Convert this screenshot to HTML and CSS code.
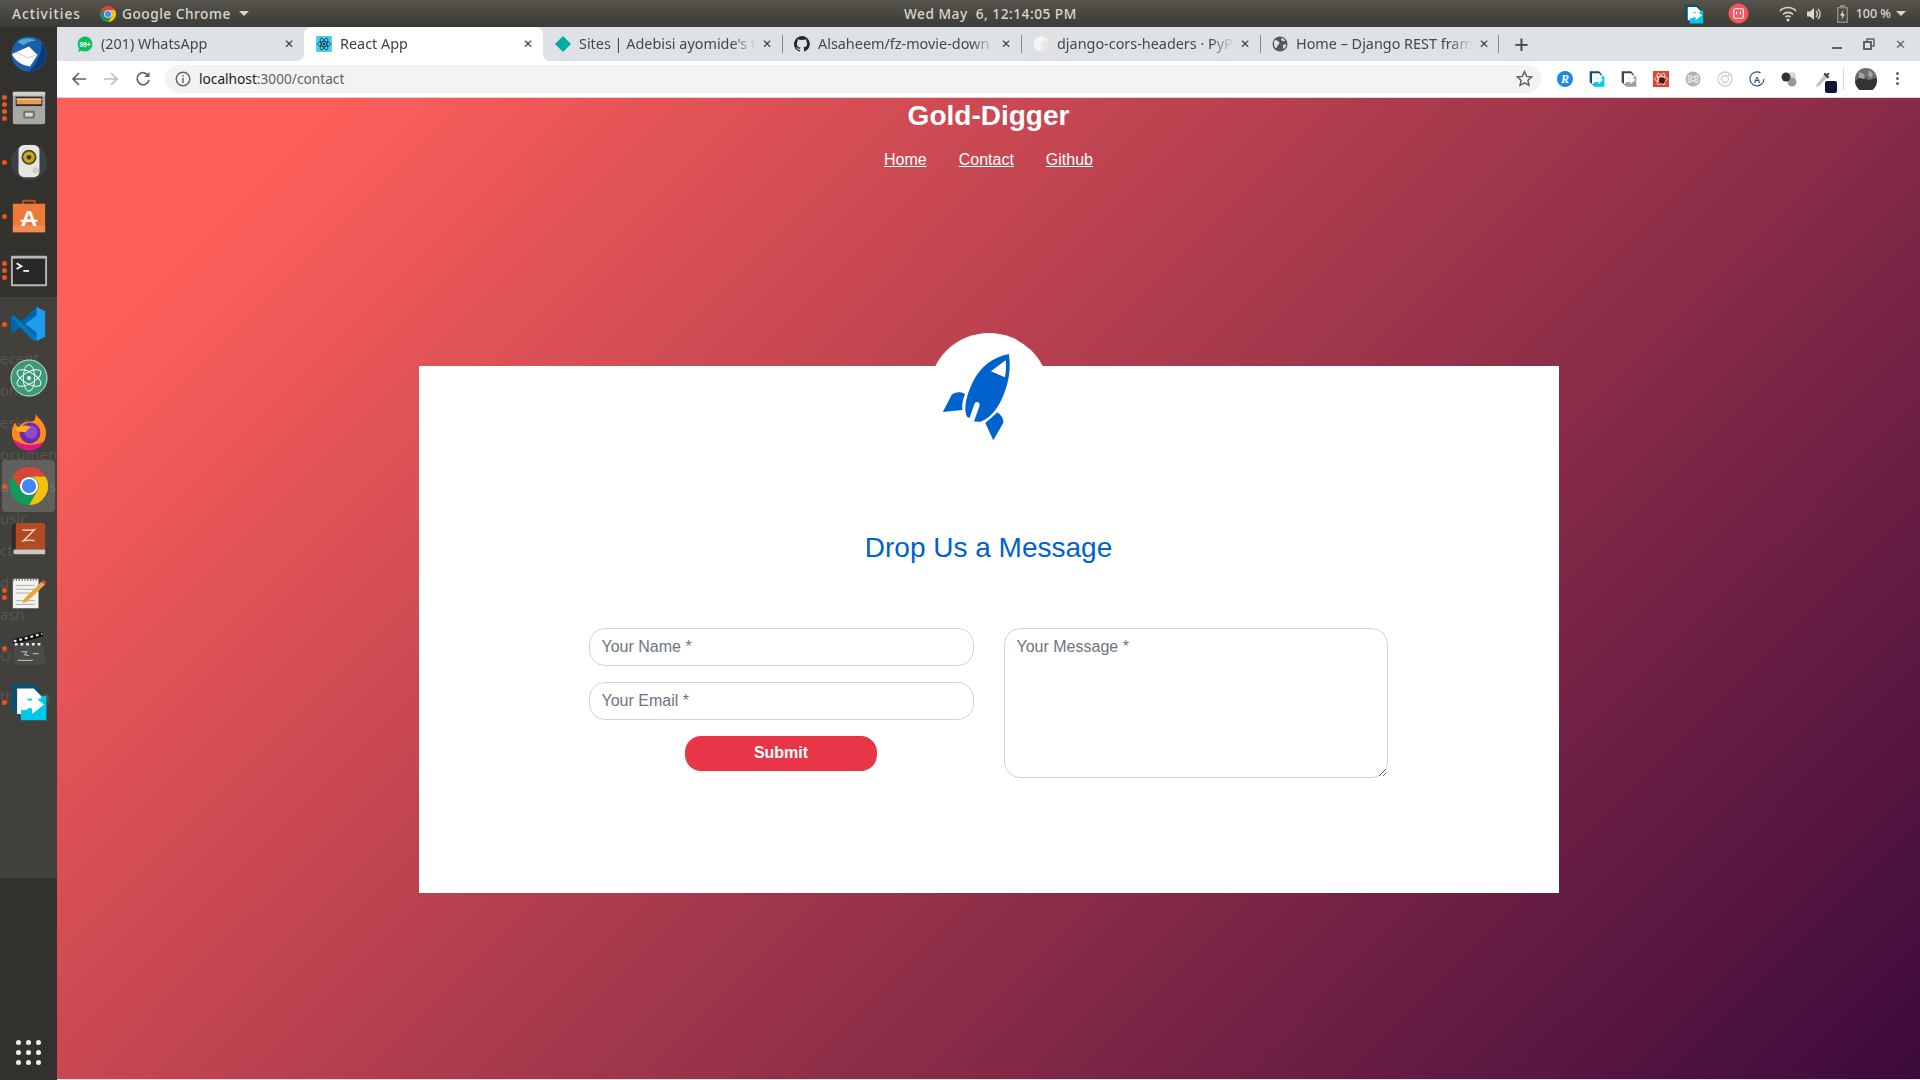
FILE: index.html
```html
<!DOCTYPE html>
<html lang="en">
<head>
  <meta charset="UTF-8">
  <title>React App</title>
  <link rel="stylesheet" href="styles.css">
</head>
<body>
  <svg class="defs" width="0" height="0">
    <symbol id="chrome" viewBox="0 0 48 48">
      <path fill="#db4437" d="M3.2 12A24 24 0 0 1 44.8 12H24a12 12 0 0 0-10.4 18z"/>
      <path fill="#f4c20d" d="M44.8 12A24 24 0 0 1 24 48L34.4 30A12 12 0 0 0 24 12z"/>
      <path fill="#0f9d58" d="M3.2 12L13.6 30A12 12 0 0 0 34.4 30L24 48A24 24 0 0 1 3.2 12z"/>
      <circle cx="24" cy="24" r="11.5" fill="#fff"/>
      <circle cx="24" cy="24" r="9" fill="#4285f4"/>
    </symbol>
    <symbol id="xdm" viewBox="0 0 48 48">
      <path fill="#0b4f71" d="M2 1h28l8 8v33H12L2 34z"/>
      <path fill="#00c8e8" d="M12 16h26l8 0v31H14z"/>
      <path fill="#fff" d="M9 7h21l9 9v4H22v7H9zM9 27h13v7H9zM9 34h5v5H9z"/>
      <path fill="#fff" d="M18 22h10v-7l15 12-15 12v-7H18z"/>
    </symbol>
  </svg>

  <header class="topbar">
    <span class="top-item activities">Activities</span>
    <span class="top-item app-menu">
      <svg class="app-logo"><use href="#chrome"/></svg>
      Google Chrome
      <i class="caret"></i>
    </span>
    <span class="clock">Wed May&nbsp; 6, 12:14:05 PM</span>
    <div class="tray">
      <svg class="tray-xdm"><use href="#xdm"/></svg>
      <svg class="tray-rec" viewBox="0 0 22 22">
        <circle cx="11" cy="11" r="10.5" fill="#f2555d"/>
        <rect x="6" y="6" width="10" height="10" rx="1.5" fill="none" stroke="#fff" stroke-width="1.2"/>
        <path d="M9 9v3M13 9v3" stroke="#fff" stroke-width="1.2"/>
      </svg>
      <svg class="tray-wifi" viewBox="0 0 18 16" fill="none" stroke="#d8d7d1" stroke-width="1.6">
        <path d="M1 5a11 11 0 0 1 16 0M4 8.5a7 7 0 0 1 10 0M6.5 11a3.5 3.5 0 0 1 5 0"/>
        <circle cx="9" cy="14" r="1.5" fill="#d8d7d1" stroke="none"/>
      </svg>
      <svg class="tray-vol" viewBox="0 0 16 16" fill="none" stroke="#d8d7d1" stroke-width="1.3">
        <path d="M1 5.5h3L8 2v12l-4-3.5H1z" fill="#d8d7d1" stroke="none"/>
        <path d="M10 5a4 4 0 0 1 0 6M12 3a7 7 0 0 1 0 10"/>
      </svg>
      <svg class="tray-bat" viewBox="0 0 13 18">
        <path d="M4 0h5v2h3v16H1V2h3z" fill="#8a8984"/>
        <path d="M2.5 3.5h8v13h-8z" fill="#4a4843"/>
        <path d="M7.5 4.5L4 10.5h2.3L5.5 15 9 9H6.700z" fill="#d8d7d1"/>
      </svg>
      <span class="battery-text">100 %</span>
      <i class="caret"></i>
    </div>
  </header>

  <div class="desktop">
    <aside class="dock">
      <div class="dock-ghost">
        <span>ecent</span>
        <span>om</span>
        <span>eskt</span>
        <span>ocumen</span>
        <span>ow &nbsp; &nbsp; ds</span>
        <span>usic</span>
        <span>ct</span>
        <span>d</span>
        <span>ash</span>
        <span class="ghost-gap">O + PA</span>
        <span class="ghost-gap">th &nbsp; &nbsp; ca</span>
      </div>

      <div class="dock-item">
        <svg class="icon-mail" viewBox="0 0 40 40">
          <circle cx="20" cy="19" r="18.5" fill="#1c5fa8"/>
          <path fill="#0a3a78" d="M20 37a18 18 0 0 0 18-18c0-5-2-9-5-12 1 10-4 22-13 30z"/>
          <path fill="#4fa3df" d="M8 6c5-4 14-5 19-1-5 0-10 2-13 5z"/>
          <path fill="#fff" d="M2 19l18-8 9 9-8 12C12 31 5 26 2 19z"/>
          <path fill="none" stroke="#b9c6d6" stroke-width="1" d="M6 17l13 6 9-3"/>
        </svg>
      </div>
      <div class="dock-item">
        <span class="pips"><b></b><b></b><b></b><b></b></span>
        <svg viewBox="0 0 40 40">
          <rect x="3" y="3" width="34" height="34" rx="2" fill="#a8a8a4"/>
          <rect x="3" y="3" width="34" height="4" fill="#cfcfcb"/>
          <rect x="6" y="8" width="28" height="10" fill="#2f2f2c"/>
          <rect x="7" y="10" width="26" height="6" fill="#e89a55"/>
          <rect x="7" y="10" width="26" height="1.5" fill="#f4c898"/>
          <rect x="14" y="23" width="12" height="8" rx="1" fill="#6e6e6a"/>
          <rect x="16" y="25" width="8" height="4" fill="#d6d6d2"/>
        </svg>
      </div>
      <div class="dock-item">
        <span class="pips"><b></b></span>
        <svg viewBox="0 0 40 40">
          <circle cx="20" cy="20" r="19" fill="#3c4146"/>
          <rect x="9" y="2" width="22" height="34" rx="6" fill="#e8e6e0"/>
          <circle cx="20" cy="15" r="8" fill="#4d4a2e"/>
          <circle cx="20" cy="15" r="6" fill="#c8a820"/>
          <circle cx="20" cy="15" r="2.5" fill="#3f3c20"/>
          <circle cx="27" cy="29" r="3.5" fill="#cfcdc6"/>
        </svg>
      </div>
      <div class="dock-item">
        <span class="pips"><b></b></span>
        <svg viewBox="0 0 40 40">
          <path fill="none" stroke="#b84f22" stroke-width="2" d="M14 9V4h12v5"/>
          <path fill="#ee7a3a" d="M3 7h34v30H3z"/>
          <path fill="#f49a66" d="M3 30h34v7H3z" opacity=".6"/>
          <text x="20" y="31" class="soft-a">A</text>
          <path fill="#fff" d="M11 24h18v2H11z"/>
        </svg>
      </div>
      <div class="dock-item">
        <span class="pips"><b></b><b></b><b></b></span>
        <svg viewBox="0 0 40 40">
          <rect x="1" y="5" width="38" height="32" rx="1" fill="#b6b6b2"/>
          <rect x="3" y="8" width="34" height="27" fill="#26282a"/>
          <path fill="none" stroke="#fff" stroke-width="1.8" d="M7 13l5 3-5 3"/>
          <path stroke="#fff" stroke-width="1.8" d="M14 21h6"/>
        </svg>
      </div>
      <div class="dock-item">
        <span class="pips"><b></b></span>
        <svg viewBox="0 0 40 40">
          <path fill="#0065a9" d="M28 2l9 4.5v27L28 38 12 23 4 29 1 27v-14l3-2 8 6z"/>
          <path fill="#007acc" d="M1 13l3-2 24 23v4l-4-1z" opacity=".9"/>
          <path fill="#1f9cf0" d="M28 2l9 4.5v27L28 38zM28 11L16 20l12 9z" fill-rule="evenodd"/>
        </svg>
      </div>
      <div class="dock-item">
        <svg viewBox="0 0 40 40" fill="none" stroke="#fff" stroke-width="1">
          <circle cx="20" cy="20" r="19" fill="#3c9a78" stroke="#d6e6dc"/>
          <ellipse cx="20" cy="20" rx="14" ry="6" transform="rotate(30 20 20)"/>
          <ellipse cx="20" cy="20" rx="14" ry="6" transform="rotate(-30 20 20)"/>
          <ellipse cx="20" cy="20" rx="14" ry="6" transform="rotate(90 20 20)"/>
          <circle cx="20" cy="20" r="2" fill="#fff" stroke="none"/>
        </svg>
      </div>
      <div class="dock-item">
        <svg viewBox="0 0 40 40">
          <path fill="#ff8a1e" d="M27 1c3 5 11 10 11 20a18 18 0 0 1-36 0c0-4 1-8 4-11 0 3 2 5 4 5 1-6 9-6 14-6 3-2 3-5 3-8z"/>
          <path fill="#e31587" d="M3 27a18 18 0 0 0 33 3c-8 4-22 6-33-3z"/>
          <circle cx="21" cy="21" r="11" fill="#6a2ca8"/>
          <circle cx="22" cy="20" r="7" fill="#8d4bd0"/>
          <path fill="#ffb01e" d="M5 17c5-4 11-5 17-2-3 1-4 3-5 5-4 0-8 0-12-3z"/>
        </svg>
      </div>
      <div class="dock-item is-active">
        <span class="pips"><b></b></span>
        <svg class="dock-chrome"><use href="#chrome"/></svg>
      </div>
      <div class="dock-item">
        <svg viewBox="0 0 40 40">
          <path fill="#2f2a28" d="M2 6c0-3 2-4 4-4h4v30H2z"/>
          <rect x="6" y="2" width="31" height="28" rx="2" fill="#b34a22"/>
          <path fill="#c9c9c5" d="M4 30h33v5H6c-2 0-3-1-2-5z"/>
          <path fill="none" stroke="#f0e3d8" stroke-width="1.3" d="M13 9c4 1 8 1 13 0L14 21c4-1 9-1 12 0"/>
        </svg>
      </div>
      <div class="dock-item">
        <span class="pips"><b></b><b></b></span>
        <svg viewBox="0 0 40 40">
          <rect x="3" y="4" width="27" height="31" fill="#f2f2ee"/>
          <path stroke="#777" stroke-width="2" stroke-dasharray="1.5 1.5" d="M3 5h27"/>
          <path stroke="#a9a9a5" d="M6 11h20M6 15h20M6 19h16M6 27h20M6 31h20"/>
          <path fill="#f0a23c" d="M33 7l4 3-19 18-5 2 2-5z"/>
          <path fill="#e34d3c" d="M33 7l2-2 3 3-1 2z"/>
        </svg>
      </div>
      <div class="dock-item">
        <span class="pips"><b></b></span>
        <svg viewBox="0 0 40 40">
          <rect x="4" y="17" width="32" height="21" rx="1" fill="#4a4a48"/>
          <path fill="#111" d="M3 11L34 3l1 5L4 16z"/>
          <path stroke="#eee" stroke-width="2.2" stroke-dasharray="3 3" d="M4 13l30-8"/>
          <path stroke="#eee" stroke-width="2.6" stroke-dasharray="3 3" d="M5 16h30"/>
          <path fill="none" stroke="#cfcfcb" d="M12 24h6l-3 3 5 1M24 26h6M8 33h16"/>
        </svg>
      </div>
      <div class="dock-item">
        <span class="pips"><b></b></span>
        <svg class="dock-xdm"><use href="#xdm"/></svg>
      </div>

      <div class="app-grid">
        <b></b><b></b><b></b><b></b><b></b><b></b><b></b><b></b><b></b>
      </div>
    </aside>

    <div class="browser">
      <div class="tabstrip">
        <div class="tab">
          <svg class="favicon" viewBox="0 0 16 16">
            <circle cx="8" cy="8" r="7.5" fill="#0dbf5a"/>
            <path fill="#0dbf5a" d="M1 16l1.500-5 3 3z"/>
            <text x="8" y="10.5" class="fav-badge">99+</text>
          </svg>
          <span class="tab-title">(201) WhatsApp</span>
          <span class="tab-close">✕</span>
        </div>
        <div class="tab is-current">
          <svg class="favicon" viewBox="0 0 16 16" fill="none" stroke="#1b3a4a" stroke-width=".8">
            <rect width="16" height="16" rx="1" fill="#4ad0ee" stroke="none"/>
            <ellipse cx="8" cy="8" rx="6.5" ry="2.5"/>
            <ellipse cx="8" cy="8" rx="6.5" ry="2.5" transform="rotate(60 8 8)"/>
            <ellipse cx="8" cy="8" rx="6.5" ry="2.5" transform="rotate(-60 8 8)"/>
            <circle cx="8" cy="8" r="1.3" fill="#1b3a4a" stroke="none"/>
          </svg>
          <span class="tab-title">React App</span>
          <span class="tab-close">✕</span>
        </div>
        <div class="tab">
          <svg class="favicon" viewBox="0 0 16 16"><path fill="#00ad9f" d="M8 0l8 8-8 8-8-8z"/></svg>
          <span class="tab-title">Sites | Adebisi ayomide's t</span>
          <span class="tab-close">✕</span>
        </div>
        <div class="tab has-line">
          <svg class="favicon" viewBox="0 0 16 16">
            <path fill="#24292e" d="M8 0a8 8 0 0 0-2.500 15.600c.4.100.5-.2.500-.4v-1.400c-2.200.5-2.700-1-2.700-1-.4-.9-.9-1.200-.9-1.200-.7-.5.100-.5.100-.5.800.100 1.200.8 1.200.8.700 1.200 1.900.9 2.300.7.100-.5.300-.9.500-1.100-1.800-.2-3.600-.9-3.600-4 0-.9.300-1.600.8-2.100-.1-.2-.4-1 .1-2.100 0 0 .7-.2 2.200.8a7.600 7.600 0 0 1 4 0c1.500-1 2.200-.8 2.200-.8.400 1.100.2 1.900.1 2.100.5.600.8 1.300.8 2.100 0 3.100-1.900 3.700-3.700 3.900.3.300.6.800.6 1.500v2.200c0 .2.100.5.600.4A8 8 0 0 0 8 0z"/>
          </svg>
          <span class="tab-title">Alsaheem/fz-movie-down</span>
          <span class="tab-close">✕</span>
        </div>
        <div class="tab has-line">
          <svg class="favicon" viewBox="0 0 16 16">
            <path fill="#f5f5f3" d="M8 0l7 3.500v9L8 16l-7-3.500v-9z"/>
            <path fill="#e8e8e4" d="M8 7l7-3.500v9L8 16z"/>
          </svg>
          <span class="tab-title">django-cors-headers · PyP</span>
          <span class="tab-close">✕</span>
        </div>
        <div class="tab has-line last-tab">
          <svg class="favicon" viewBox="0 0 16 16">
            <circle cx="8" cy="8" r="7.5" fill="#55595e"/>
            <path fill="#dee1e6" d="M3 4c2 0 3 1 4 2s0 2-1 3-1 3-2 3-2-2-2-4 0-3 1-4zM10 2c2 1 3 2 3 3h-3l-1-2zM11 9l3-1c0 3-1 4-3 5z"/>
          </svg>
          <span class="tab-title">Home – Django REST fram</span>
          <span class="tab-close">✕</span>
        </div>
        <span class="new-tab">+</span>
        <div class="win-controls">
          <i class="win-min"></i>
          <svg class="win-max" viewBox="0 0 12 12" fill="none" stroke="#5f6368">
            <path stroke-width="2" d="M1 4h7v7H1z"/>
            <path stroke-width="1.5" d="M4 3V1h7v7H9"/>
          </svg>
          <span class="win-close">✕</span>
        </div>
      </div>

      <div class="toolbar">
        <svg class="nav-btn" viewBox="0 0 16 16" fill="none" stroke="#5f6368" stroke-width="1.7">
          <path d="M15 8H2M8 2L2 8l6 6"/>
        </svg>
        <svg class="nav-btn" viewBox="0 0 16 16" fill="none" stroke="#b9bcc0" stroke-width="1.7">
          <path d="M1 8h13M8 2l6 6-6 6"/>
        </svg>
        <svg class="nav-btn" viewBox="0 0 16 16" fill="none" stroke="#5f6368" stroke-width="1.7">
          <path d="M13.5 5A6 6 0 1 0 14 9"/>
          <path d="M14.5 1v5h-5" fill="#5f6368" stroke="none"/>
        </svg>
        <div class="omnibox">
          <svg class="info" viewBox="0 0 16 16" fill="none" stroke="#5f6368" stroke-width="1.4">
            <circle cx="8" cy="8" r="6.8"/>
            <path d="M8 7v5M8 4v1.5"/>
          </svg>
          <span class="url">localhost<em>:3000/contact</em></span>
          <svg class="star" viewBox="0 0 16 16" fill="none" stroke="#5f6368" stroke-width="1.4">
            <path d="M8 1.5l2 4.500 4.800.5-3.600 3.200 1 4.800L8 12.100l-4.200 2.400 1-4.800L1.200 6.500 6 6z"/>
          </svg>
        </div>
        <div class="extensions">
          <svg class="ext" viewBox="0 0 16 16">
            <circle cx="8" cy="8" r="8" fill="#1e88e5"/>
            <text x="8" y="12" class="ext-r">R</text>
          </svg>
          <svg class="ext"><use href="#xdm"/></svg>
          <svg class="ext is-gray"><use href="#xdm"/></svg>
          <svg class="ext" viewBox="0 0 16 16" fill="none" stroke="#fff" stroke-width=".7">
            <rect width="16" height="16" fill="#e0442e" stroke="none"/>
            <ellipse cx="8" cy="8" rx="6.5" ry="2.5"/>
            <ellipse cx="8" cy="8" rx="6.5" ry="2.5" transform="rotate(60 8 8)"/>
            <ellipse cx="8" cy="8" rx="6.5" ry="2.5" transform="rotate(-60 8 8)"/>
            <circle cx="9" cy="9.5" r="3" fill="#33201c" stroke="none"/>
          </svg>
          <svg class="ext" viewBox="0 0 16 16" fill="none">
            <circle cx="8" cy="8" r="7.5" fill="#b4b4b4"/>
            <path stroke="#f2f2f2" stroke-width="1.1" d="M6 6h4v4H6zM6 6a1.500 1.500 0 1 0-1.500 1.500M10 6a1.500 1.500 0 1 1 1.500 1.500M6 10a1.500 1.500 0 1 1-1.500-1.500M10 10a1.500 1.500 0 1 0 1.500-1.500"/>
          </svg>
          <svg class="ext" viewBox="0 0 16 16" fill="none" stroke="#cfcfcf" stroke-width="1.3">
            <circle cx="8" cy="8" r="7"/>
            <circle cx="8" cy="8" r="3.5"/>
            <circle cx="12" cy="4" r="1" fill="#cfcfcf" stroke="none"/>
          </svg>
          <svg class="ext" viewBox="0 0 16 16" fill="none" stroke="#2a4a6a" stroke-width="1.1">
            <path d="M11.5 1.800A7 7 0 1 0 15 8"/>
            <text x="8" y="11.5" class="ext-a">A</text>
          </svg>
          <svg class="ext" viewBox="0 0 16 16">
            <circle cx="11" cy="5" r="4" fill="#d8d8d8"/>
            <circle cx="11" cy="11" r="4.5" fill="#9a9a9a"/>
            <circle cx="5" cy="6" r="4.5" fill="#333"/>
          </svg>
          <div class="ext-dropper">
            <svg class="ext" viewBox="0 0 16 16">
              <path fill="#c4c4c4" d="M9 4l3 3-8 8-3 1 1-3z"/>
              <path fill="#444" d="M10 1.500l1.500 1.500 2-1.500 1 1-1.500 2 1.500 1.500-2 1.500-4-4z"/>
            </svg>
            <span class="dropper-badge"></span>
          </div>
          <i class="ext-sep"></i>
          <svg class="avatar" viewBox="0 0 22 22">
            <circle cx="11" cy="11" r="11" fill="#6e6e6e"/>
            <path fill="#333" d="M0 13c3-2 5-5 8-5s3 4 6 4 5-3 8-1v2a11 11 0 0 1-22 0z"/>
            <path fill="#a4a4a4" d="M4 4l5 2 1 5-6-1zM14 2l4 4-2 4-3-3z"/>
          </svg>
          <span class="kebab"><b></b><b></b><b></b></span>
        </div>
      </div>

      <main class="page">
        <h1 class="site-title">Gold-Digger</h1>
        <nav class="site-nav">
          <a href="#">Home</a>
          <a href="#">Contact</a>
          <a href="#">Github</a>
        </nav>

        <section class="contact-card">
          <div class="contact-logo">
            <svg class="rocket" viewBox="180 130 210 265">
              <path fill="#0062cc" d="M384 133c6 40 2 75-14 118-15 38-35 72-72 86l-19-1 17-48c2-10-12-15-16-4l-14 40c-6 4-10-4-12-14-4-24 4-56 20-90 20-44 60-78 110-87z"/>
              <path fill="#fff" d="M374 152l-44 33 42 18c4-16 4-34 2-51z"/>
              <path fill="#0062cc" d="M185 308l27-52c8-8 28-12 40-2-6 14-10 30-8 48z"/>
              <path fill="#0062cc" d="M337 393l-24-52 36-32c12 6 20 20 18 32z"/>
            </svg>
          </div>
          <h2 class="contact-heading">Drop Us a Message</h2>
          <form class="contact-form">
            <div class="form-left">
              <input class="field" type="text" placeholder="Your Name *">
              <input class="field" type="text" placeholder="Your Email *">
              <button class="submit-btn" type="button">Submit</button>
            </div>
            <textarea class="field field-message" placeholder="Your Message *"></textarea>
          </form>
        </section>
      </main>
    </div>
  </div>
</body>
</html>
```

FILE: styles.css
```css
* {
  box-sizing: border-box;
}
html, body {
  height: 100%;
}
body {
  margin: 0;
  display: flex;
  flex-direction: column;
  overflow: hidden;
  font-family: "Liberation Sans", Arial, sans-serif;
}
.defs {
  position: absolute;
}

/* ubuntu top bar */
.topbar {
  height: 27px;
  flex: none;
  position: relative;
  display: flex;
  align-items: center;
  padding-left: 12px;
  background: linear-gradient(#57544d, #3c3a35);
  color: #d8d7d1;
  font-family: "Noto Sans", sans-serif;
  font-size: 13.7px;
  font-weight: 500;
  letter-spacing: .5px;
}
.top-item {
  display: flex;
  align-items: center;
}
.activities {
  width: 88px;
  letter-spacing: 1px;
}
.app-logo {
  width: 16px;
  height: 16px;
  margin-right: 6px;
}
.caret {
  display: inline-block;
  margin-left: 8px;
  border-left: 5px solid transparent;
  border-right: 5px solid transparent;
  border-top: 5px solid #d8d7d1;
}
.clock {
  position: absolute;
  left: 904px;
  width: 170px;
  text-align: center;
  white-space: nowrap;
}
.tray {
  margin-left: auto;
  display: flex;
  align-items: center;
  padding-right: 14px;
}
.tray-xdm {
  width: 20px;
  height: 22px;
  margin-right: 24px;
}
.tray-rec {
  width: 21px;
  height: 21px;
  margin-right: 30px;
}
.tray-wifi {
  width: 18px;
  height: 16px;
  margin-right: 9px;
}
.tray-vol {
  width: 16px;
  height: 16px;
  margin-right: 14px;
}
.tray-bat {
  width: 13px;
  height: 18px;
  margin-right: 7px;
}
.battery-text {
  letter-spacing: 0;
  font-size: 12.5px;
}
.tray .caret {
  margin-left: 5px;
}

.desktop {
  flex: 1;
  display: flex;
  min-height: 0;
}

/* launcher */
.dock {
  width: 57px;
  flex: none;
  position: relative;
  overflow: hidden;
  background: linear-gradient(#33312e 0 270px, #42403b 270px 851px, #32312e 851px);
}
.dock-ghost {
  position: absolute;
  top: 315px;
  left: 0;
  display: flex;
  flex-direction: column;
  font-family: "Noto Sans", sans-serif;
  font-size: 15px;
  line-height: 32px;
  color: rgba(255, 255, 255, .13);
  white-space: nowrap;
}
.ghost-gap {
  margin-top: 9px;
}
.dock-item {
  height: 54px;
  position: relative;
  display: flex;
  align-items: center;
  justify-content: center;
}
.dock-item svg {
  width: 38px;
  height: 38px;
  position: relative;
}
.dock-item .icon-mail {
  margin-top: 2px;
}
.dock-item.is-active::before {
  content: "";
  position: absolute;
  inset: 1px 2px;
  border-radius: 4px;
  background: rgba(255, 255, 255, .17);
}
.pips {
  position: absolute;
  left: 2px;
  top: 0;
  bottom: 0;
  display: flex;
  flex-direction: column;
  justify-content: center;
  gap: 2px;
  z-index: 1;
}
.pips b {
  width: 5px;
  height: 5px;
  border-radius: 50%;
  background: #e95420;
}
.soft-a {
  font: bold 24px "Liberation Sans", sans-serif;
  fill: #fff;
  text-anchor: middle;
}
.app-grid {
  position: absolute;
  left: 16px;
  top: 1013px;
  display: grid;
  grid-template-columns: repeat(3, 5px);
  gap: 5px;
}
.app-grid b {
  width: 5px;
  height: 5px;
  border-radius: 50%;
  background: #eeeeec;
}

/* chrome window */
.browser {
  flex: 1;
  min-width: 0;
  display: flex;
  flex-direction: column;
}
.tabstrip {
  height: 34px;
  flex: none;
  display: flex;
  align-items: center;
  padding-left: 8px;
  background: #dee1e6;
  font-family: "Noto Sans", sans-serif;
  font-size: 14.4px;
  color: #45484c;
}
.tab {
  width: 239px;
  height: 34px;
  flex: none;
  position: relative;
  display: flex;
  align-items: center;
  padding: 0 7px 0 12px;
}
.tab.has-line::before, .last-tab::after {
  content: "";
  position: absolute;
  top: 8px;
  bottom: 8px;
  left: 0;
  width: 1px;
  background: #85888c;
}
.last-tab::after {
  left: auto;
  right: 0;
}
.tab.is-current {
  background: #fff;
  border-radius: 8px 8px 0 0;
  color: #3c4043;
}
.tab.is-current::before, .tab.is-current::after {
  content: "";
  position: absolute;
  bottom: 0;
  width: 8px;
  height: 8px;
}
.tab.is-current::before {
  left: -8px;
  background: radial-gradient(circle at 0 0, transparent 8px, #fff 8.5px);
}
.tab.is-current::after {
  right: -8px;
  background: radial-gradient(circle at 100% 0, transparent 8px, #fff 8.5px);
}
.favicon {
  width: 16px;
  height: 16px;
  flex: none;
  margin-right: 8px;
}
.fav-badge {
  font: bold 6.5px "Liberation Sans", sans-serif;
  fill: #fff;
  text-anchor: middle;
}
.tab-title {
  flex: 1;
  min-width: 0;
  padding-bottom: 2px;
  overflow: hidden;
  white-space: nowrap;
  -webkit-mask-image: linear-gradient(to right, #000 85%, transparent 98%);
  mask-image: linear-gradient(to right, #000 85%, transparent 98%);
}
.tab-close {
  width: 16px;
  flex: none;
  text-align: center;
  font-size: 12px;
  font-weight: 700;
  color: #3c4043;
  font-family: "DejaVu Sans", sans-serif;
}
.new-tab {
  margin-left: 15px;
  font-size: 26px;
  line-height: 1;
  color: #45484c;
}
.win-controls {
  margin-left: auto;
  display: flex;
  align-items: center;
  padding-right: 14px;
}
.win-min {
  width: 10px;
  height: 2px;
  margin-top: 8px;
  margin-right: 21px;
  background: #5f6368;
}
.win-max {
  width: 12px;
  height: 12px;
  margin-right: 20px;
}
.win-close {
  font-size: 13px;
  color: #5f6368;
  font-family: "DejaVu Sans", sans-serif;
}

.toolbar {
  height: 37px;
  flex: none;
  display: flex;
  align-items: center;
  padding: 0 0 1px 14px;
  background: #fff;
  border-bottom: 1px solid #d6d8dc;
}
.nav-btn {
  width: 16px;
  height: 16px;
  margin-right: 16px;
}
.omnibox {
  width: 1376px;
  height: 28px;
  margin-left: -2px;
  display: flex;
  align-items: center;
  padding: 0 8px 0 10px;
  border-radius: 14px;
  background: #f1f3f4;
  font-family: "Noto Sans", sans-serif;
  font-size: 13.7px;
  color: #202124;
}
.info {
  width: 16px;
  height: 16px;
  margin-right: 8px;
}
.url em {
  font-style: normal;
  color: #5f6368;
}
.star {
  width: 17px;
  height: 17px;
  margin-left: auto;
}
.extensions {
  display: flex;
  align-items: center;
  margin-left: 16px;
  gap: 16px;
}
.ext {
  width: 16px;
  height: 16px;
  display: block;
}
.ext.is-gray {
  filter: grayscale(1);
}
.ext-r {
  font: italic bold 12px "Liberation Serif", serif;
  fill: #fff;
  text-anchor: middle;
}
.ext-a {
  font: bold 9px "Liberation Sans", sans-serif;
  fill: #2a4a6a;
  stroke: none;
  text-anchor: middle;
}
.ext-dropper {
  position: relative;
  margin-left: 2px;
}
.dropper-badge {
  position: absolute;
  right: -6px;
  bottom: -6px;
  width: 12px;
  height: 12px;
  background: #10123a;
  border-radius: 2px;
}
.ext-sep {
  width: 1px;
  height: 22px;
  background: #d6d8dc;
  margin-left: -4px;
}
.avatar {
  width: 22px;
  height: 22px;
  margin-left: -5px;
}
.kebab {
  display: flex;
  flex-direction: column;
  gap: 2px;
  margin-left: 3px;
}
.kebab b {
  width: 3px;
  height: 3px;
  border-radius: 50%;
  background: #5f6368;
}

/* the actual page */
.page {
  flex: 1;
  display: flex;
  flex-direction: column;
  align-items: center;
  background: linear-gradient(135deg, #fd5f5a 10%, #3c0a3c 100%);
  border-bottom: 1px solid #f0e6e6;
}
.site-title {
  margin: 0;
  padding-top: 2px;
  font-size: 28px;
  line-height: 32px;
  color: #fff;
}
.site-nav {
  display: flex;
  gap: 32px;
  margin-top: 19px;
  font-size: 16px;
  line-height: 18px;
}
.site-nav a {
  color: #fff;
}
.contact-card {
  width: 1140px;
  height: 527px;
  margin-top: 197px;
  position: relative;
  background: #fff;
  padding: 165px 170px 0;
}
.contact-logo {
  position: absolute;
  top: -33px;
  left: 50%;
  width: 120px;
  height: 120px;
  margin-left: -60px;
  display: flex;
  justify-content: center;
  padding: 20px 26px 0 0;
  border-radius: 50%;
  background: #fff;
}
.rocket {
  width: 70px;
  height: 88px;
}
.contact-heading {
  margin: 0;
  text-align: center;
  font-size: 28px;
  font-weight: 400;
  line-height: 34px;
  color: #0062cc;
}
.contact-form {
  display: flex;
  gap: 30px;
  margin-top: 63px;
}
.form-left {
  width: 385px;
  flex: none;
  display: flex;
  flex-direction: column;
  align-items: center;
}
.field {
  display: block;
  width: 100%;
  height: 38px;
  padding: 6px 12px;
  border: 1px solid #ced4da;
  border-radius: 16px;
  font-family: inherit;
  font-size: 16px;
  line-height: 24px;
  color: #495057;
  background: #fff;
  outline: none;
}
.field + .field {
  margin-top: 16px;
}
.field::placeholder {
  color: #6c757d;
  opacity: 1;
}
.field-message {
  width: 384px;
  height: 150px;
  flex: none;
}
.submit-btn {
  width: 192px;
  height: 35px;
  margin-top: 16px;
  padding-bottom: 3px;
  border: none;
  border-radius: 16px;
  background: #e83547;
  color: #fff;
  font-family: inherit;
  font-size: 16px;
  font-weight: 700;
}
```
